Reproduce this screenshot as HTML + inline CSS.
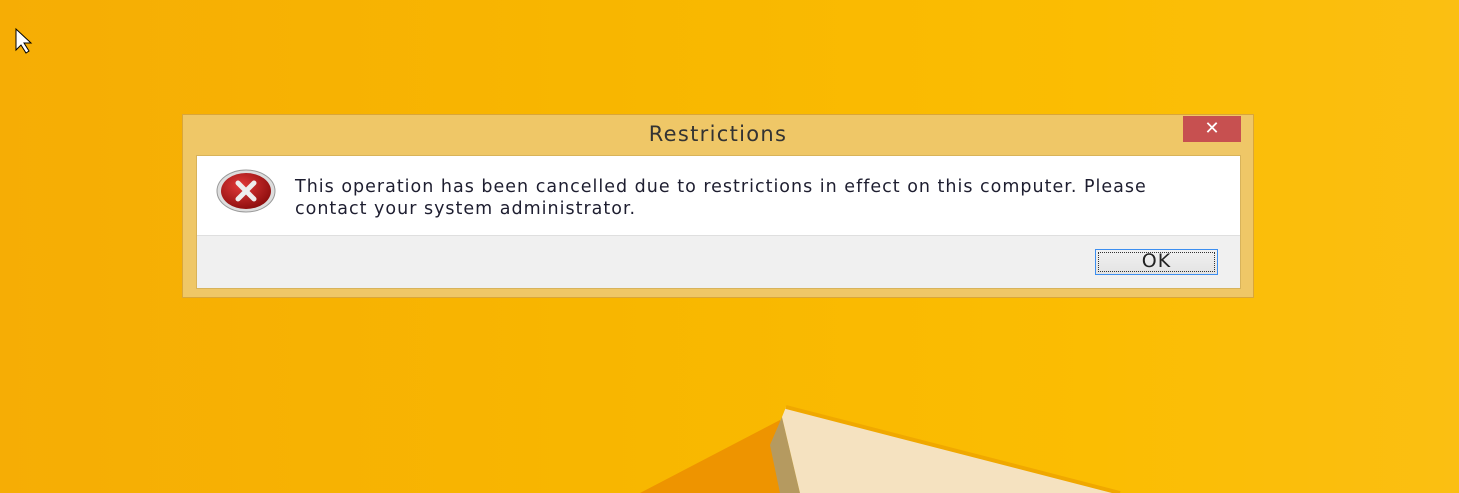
<!DOCTYPE html>
<html><head><style>
body{margin:0;width:1459px;height:493px;overflow:hidden;position:relative;background:linear-gradient(90deg,#f6ad05 0%,#f8b600 40%,#fbbd02 75%,#fbbf12 100%);font-family:"DejaVu Sans",sans-serif}
.dlg{position:absolute;left:182px;top:114px;width:1072px;height:184px;background:#efc767;border:1px solid #d9a63a;box-sizing:border-box}
.title{position:absolute;left:0;right:0;top:7px;text-align:center;font-size:21px;letter-spacing:1.3px;color:#333}
.close{position:absolute;left:1000px;top:1px;width:58px;height:26px;background:#c75050;color:#fff;text-align:center;font-size:18px;line-height:25px;font-family:"Liberation Sans",sans-serif}
.panel{position:absolute;left:13px;top:40px;width:1045px;height:134px;border:1px solid #d8b35a;box-sizing:border-box;background:#f0f0f0}
.white{position:absolute;left:0;top:0;right:0;height:79px;background:#fff;border-bottom:1px solid #dfdfdf}
.msg{position:absolute;left:98px;top:20px;font-size:17.5px;letter-spacing:1px;line-height:22px;color:#1e1e30;white-space:nowrap}
.ok{position:absolute;left:898px;top:93px;width:123px;height:26px;box-sizing:border-box;border:1px solid #3c8ef0;background:linear-gradient(#f1f1f1,#e3e3e3);text-align:center;font-size:19px;letter-spacing:1px;line-height:23px;color:#222}
.ok:after{content:"";position:absolute;left:2px;top:2px;right:2px;bottom:2px;border:1px dotted #333}
</style></head><body>
<svg width="1459" height="493" style="position:absolute;left:0;top:0">
<polygon points="640,493 780,420 790,493" fill="#ee9400"/>
<polygon points="770,445 782,417 800,493 780,493" fill="#b59a60"/>
<polygon points="786,407 1120,493 1100,493 800,493 782,417" fill="#f5e2c0"/>
<polyline points="786,407 1120,493" stroke="#f0a800" stroke-width="4" fill="none"/>
<polygon points="16,29 16,50 21,45 26,53 29,51 24,43 31,43" fill="#fff" stroke="#000" stroke-width="1"/>
</svg>
<div class="dlg">
<div class="title">Restrictions</div>
<div class="close">✕</div>
<div class="panel">
<div class="white">
<svg width="62" height="46" style="position:absolute;left:18px;top:12px" viewBox="0 0 62 46">
<defs><radialGradient id="g" cx="40%" cy="35%" r="70%"><stop offset="0" stop-color="#e23a3a"/><stop offset="1" stop-color="#8a0c0c"/></radialGradient></defs>
<ellipse cx="31" cy="23" rx="29" ry="21" fill="#ddd" stroke="#999"/>
<ellipse cx="31" cy="23" rx="25" ry="18" fill="url(#g)"/>
<path d="M23 15 L39 31 M39 15 L23 31" stroke="#eee" stroke-width="5" stroke-linecap="round"/>
</svg>
<div class="msg">This operation has been cancelled due to restrictions in effect on this computer. Please<br>contact your system administrator.</div>
</div>
<div class="ok">OK</div>
</div>
</div>
</body></html>
